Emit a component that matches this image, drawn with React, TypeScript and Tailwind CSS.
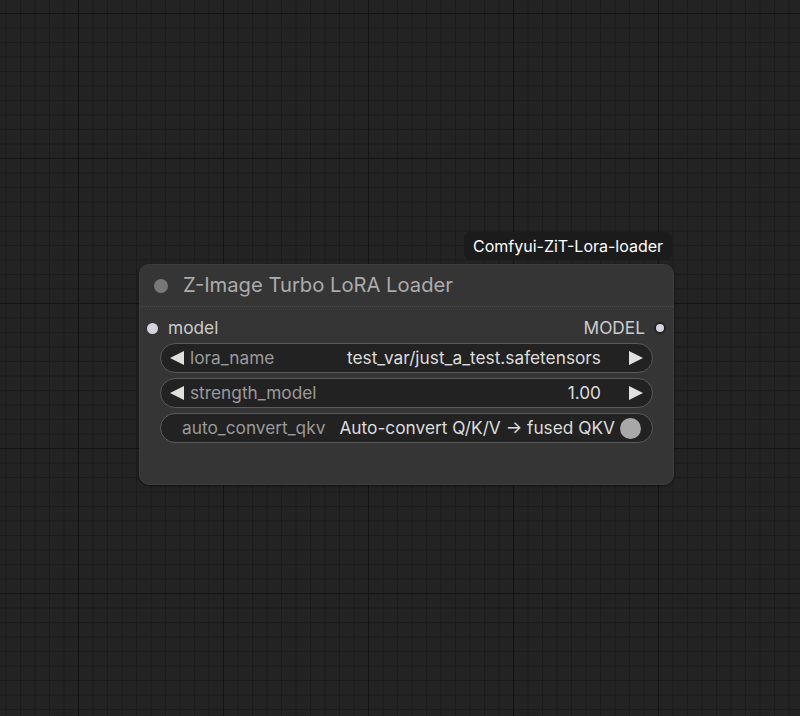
import React from "react";

const gridStyle =
  "[background-image:linear-gradient(to_right,#141414_1.5px,transparent_1.5px),linear-gradient(to_bottom,#141414_1.5px,transparent_1.5px),linear-gradient(to_right,#1b1b1b_1px,transparent_1px),linear-gradient(to_bottom,#1b1b1b_1px,transparent_1px)] [background-size:145px_145px,145px_145px,14.5px_14.5px,14.5px_14.5px] [background-position:78px_13px,78px_13px,5.5px_13px,5.5px_13px]";

function Arrow({ dir }: { dir: "l" | "r" }) {
  return (
    <svg width="14" height="16" viewBox="0 0 14 16" className="shrink-0">
      {dir === "l" ? (
        <polygon points="14,1 14,15 0,8" fill="#e0e0e0" />
      ) : (
        <polygon points="0,1 0,15 14,8" fill="#e0e0e0" />
      )}
    </svg>
  );
}

function Widget({
  label,
  value,
  arrows,
  toggle,
}: {
  label: string;
  value: string;
  arrows?: boolean;
  toggle?: boolean;
}) {
  return (
    <div className="h-[30px] rounded-full border border-[#5a5a5a] bg-[#222222] flex items-center text-[17.3px]">
      {arrows ? (
        <div className="pl-[9px] pr-[6px] flex items-center">
          <Arrow dir="l" />
        </div>
      ) : (
        <div className="w-[21px]" />
      )}
      <span className="text-[#9a9a9a] whitespace-nowrap">{label}</span>
      <span className="flex-1" />
      <span className="text-[#dddddd] whitespace-nowrap">{value}</span>
      {arrows ? (
        <div className="pl-[28px] pr-[9px] flex items-center">
          <Arrow dir="r" />
        </div>
      ) : null}
      {toggle ? (
        <div className="pl-[5px] pr-[11px] flex items-center">
          <div className="w-[21px] h-[21px] rounded-full bg-[#a8a8a8]" />
        </div>
      ) : null}
    </div>
  );
}

export default function App() {
  return (
    <div
      className={`relative w-[800px] h-[716px] overflow-hidden bg-[#232323] ${gridStyle}`}
      style={{ fontFamily: "Inter, 'Noto Sans', sans-serif" }}
    >
      <div className="absolute left-[464px] top-[232px] h-[28px] px-[9px] rounded-[7px] bg-[#1b1b1b] text-white text-[16px] flex items-center">
        Comfyui-ZiT-Lora-loader
      </div>
      <div className="absolute left-[139px] top-[264px] w-[535px] h-[221px] rounded-[10px] bg-[#353535] border border-[#3c3c3c] shadow-[0_1px_3px_rgba(0,0,0,0.5)] flex flex-col">
        <div className="h-[42px] flex items-center border-b border-dotted border-[#4a4a4a]">
          <div className="ml-[14px] w-[14px] h-[14px] rounded-full bg-[#787878]" />
          <span className="ml-[15px] text-[20.2px] text-[#acacac]">
            Z-Image Turbo LoRA Loader
          </span>
        </div>
        <div className="h-[36px] pt-[6px] flex items-center text-[17.3px]">
          <div className="ml-[7px] w-[11px] h-[11px] rounded-full bg-[#d4d4dc]" />
          <span className="ml-[10px] text-[#cccccc]">model</span>
          <span className="flex-1" />
          <span className="text-[#cccccc]">MODEL</span>
          <div className="ml-[9px] mr-[7px] w-[12px] h-[12px] rounded-full bg-[#d4d4dc] border-2 border-[#222]" />
        </div>
        <div className="px-[20px] flex flex-col gap-[5px]">
          <Widget
            label="lora_name"
            value="test_var/just_a_test.safetensors"
            arrows
          />
          <Widget label="strength_model" value="1.00" arrows />
          <Widget
            label="auto_convert_qkv"
            value="Auto-convert Q/K/V → fused QKV"
            toggle
          />
        </div>
      </div>
    </div>
  );
}
